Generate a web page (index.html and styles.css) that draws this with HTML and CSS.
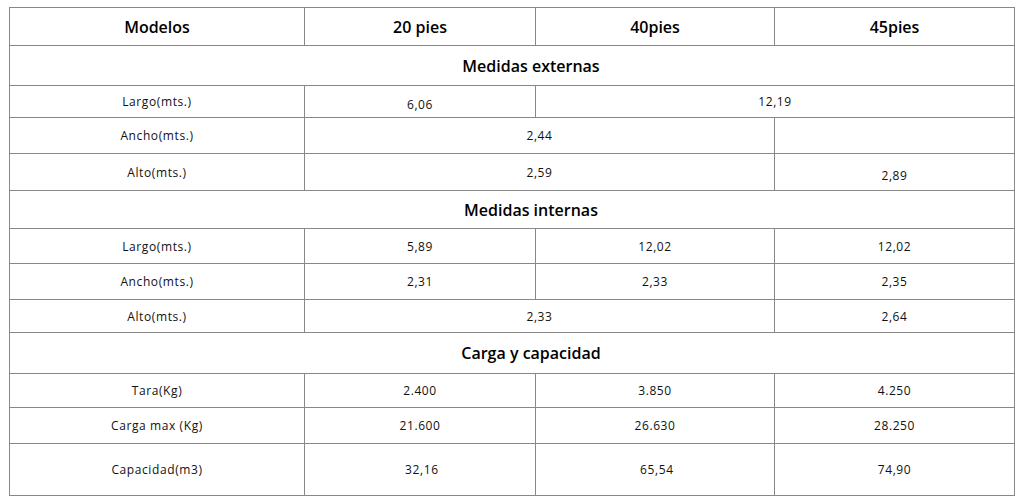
FILE: index.html
```html
<!DOCTYPE html>
<html lang="es">
<head>
<meta charset="utf-8">
<title>Modelos de contenedores</title>
<link rel="stylesheet" href="styles.css">
</head>
<body>
<table class="specs">
  <colgroup>
    <col class="c1"><col class="c2"><col class="c3"><col class="c4">
  </colgroup>
  <thead>
    <tr class="r-head">
      <th>Modelos</th><th>20 pies</th><th>40pies</th><th>45pies</th>
    </tr>
  </thead>
  <tbody>
    <tr class="h40"><th class="sec" colspan="4">Medidas externas</th></tr>
    <tr class="h32"><td>Largo(mts.)</td><td class="low">6,06</td><td colspan="2">12,19</td></tr>
    <tr class="h36"><td>Ancho(mts.)</td><td colspan="2">2,44</td><td></td></tr>
    <tr class="h37"><td>Alto(mts.)</td><td colspan="2">2,59</td><td class="low">2,89</td></tr>
    <tr class="h38"><th class="sec" colspan="4">Medidas internas</th></tr>
    <tr class="h35"><td>Largo(mts.)</td><td>5,89</td><td>12,02</td><td>12,02</td></tr>
    <tr class="h36"><td>Ancho(mts.)</td><td>2,31</td><td>2,33</td><td>2,35</td></tr>
    <tr class="h33"><td>Alto(mts.)</td><td colspan="2">2,33</td><td>2,64</td></tr>
    <tr class="h41"><th class="sec" colspan="4">Carga y capacidad</th></tr>
    <tr class="h34"><td>Tara(Kg)</td><td>2.400</td><td>3.850</td><td>4.250</td></tr>
    <tr class="h36"><td>Carga max (Kg)</td><td>21.600</td><td>26.630</td><td>28.250</td></tr>
    <tr class="h52"><td>Capacidad(m3)</td><td>&nbsp;32,16</td><td>&nbsp;65,54</td><td>74,90</td></tr>
  </tbody>
</table>
</body>
</html>
```
FILE: styles.css
```css
html, body {
  margin: 0;
  padding: 0;
  background: #ffffff;
}
body {
  padding: 7px 9px 0 9px;
  font-family: "Open Sans", "Liberation Sans", sans-serif;
  color: #111111;
}
.specs {
  border-collapse: collapse;
  table-layout: fixed;
  width: 1006px;
}
.c1 { width: 295px; }
.c2 { width: 231px; }
.c3 { width: 239px; }
.c4 { width: 240px; }
.specs th,
.specs td {
  border: 1px solid #888888;
  text-align: center;
  vertical-align: middle;
  padding: 0;
}
.specs th {
  font-size: 16px;
  font-weight: 600;
  color: #000000;
}
.specs th.sec {
  padding-left: 38px;
}
.specs td {
  font-size: 12px;
  font-weight: 400;
  letter-spacing: 0.6px;
}
.specs td.low {
  padding-top: 6px;
}
.r-head { height: 38px; }
.h32 { height: 32px; }
.h33 { height: 33px; }
.h34 { height: 34px; }
.h35 { height: 35px; }
.h36 { height: 36px; }
.h37 { height: 37px; }
.h38 { height: 38px; }
.h40 { height: 40px; }
.h41 { height: 41px; }
.h52 { height: 52px; }
```
